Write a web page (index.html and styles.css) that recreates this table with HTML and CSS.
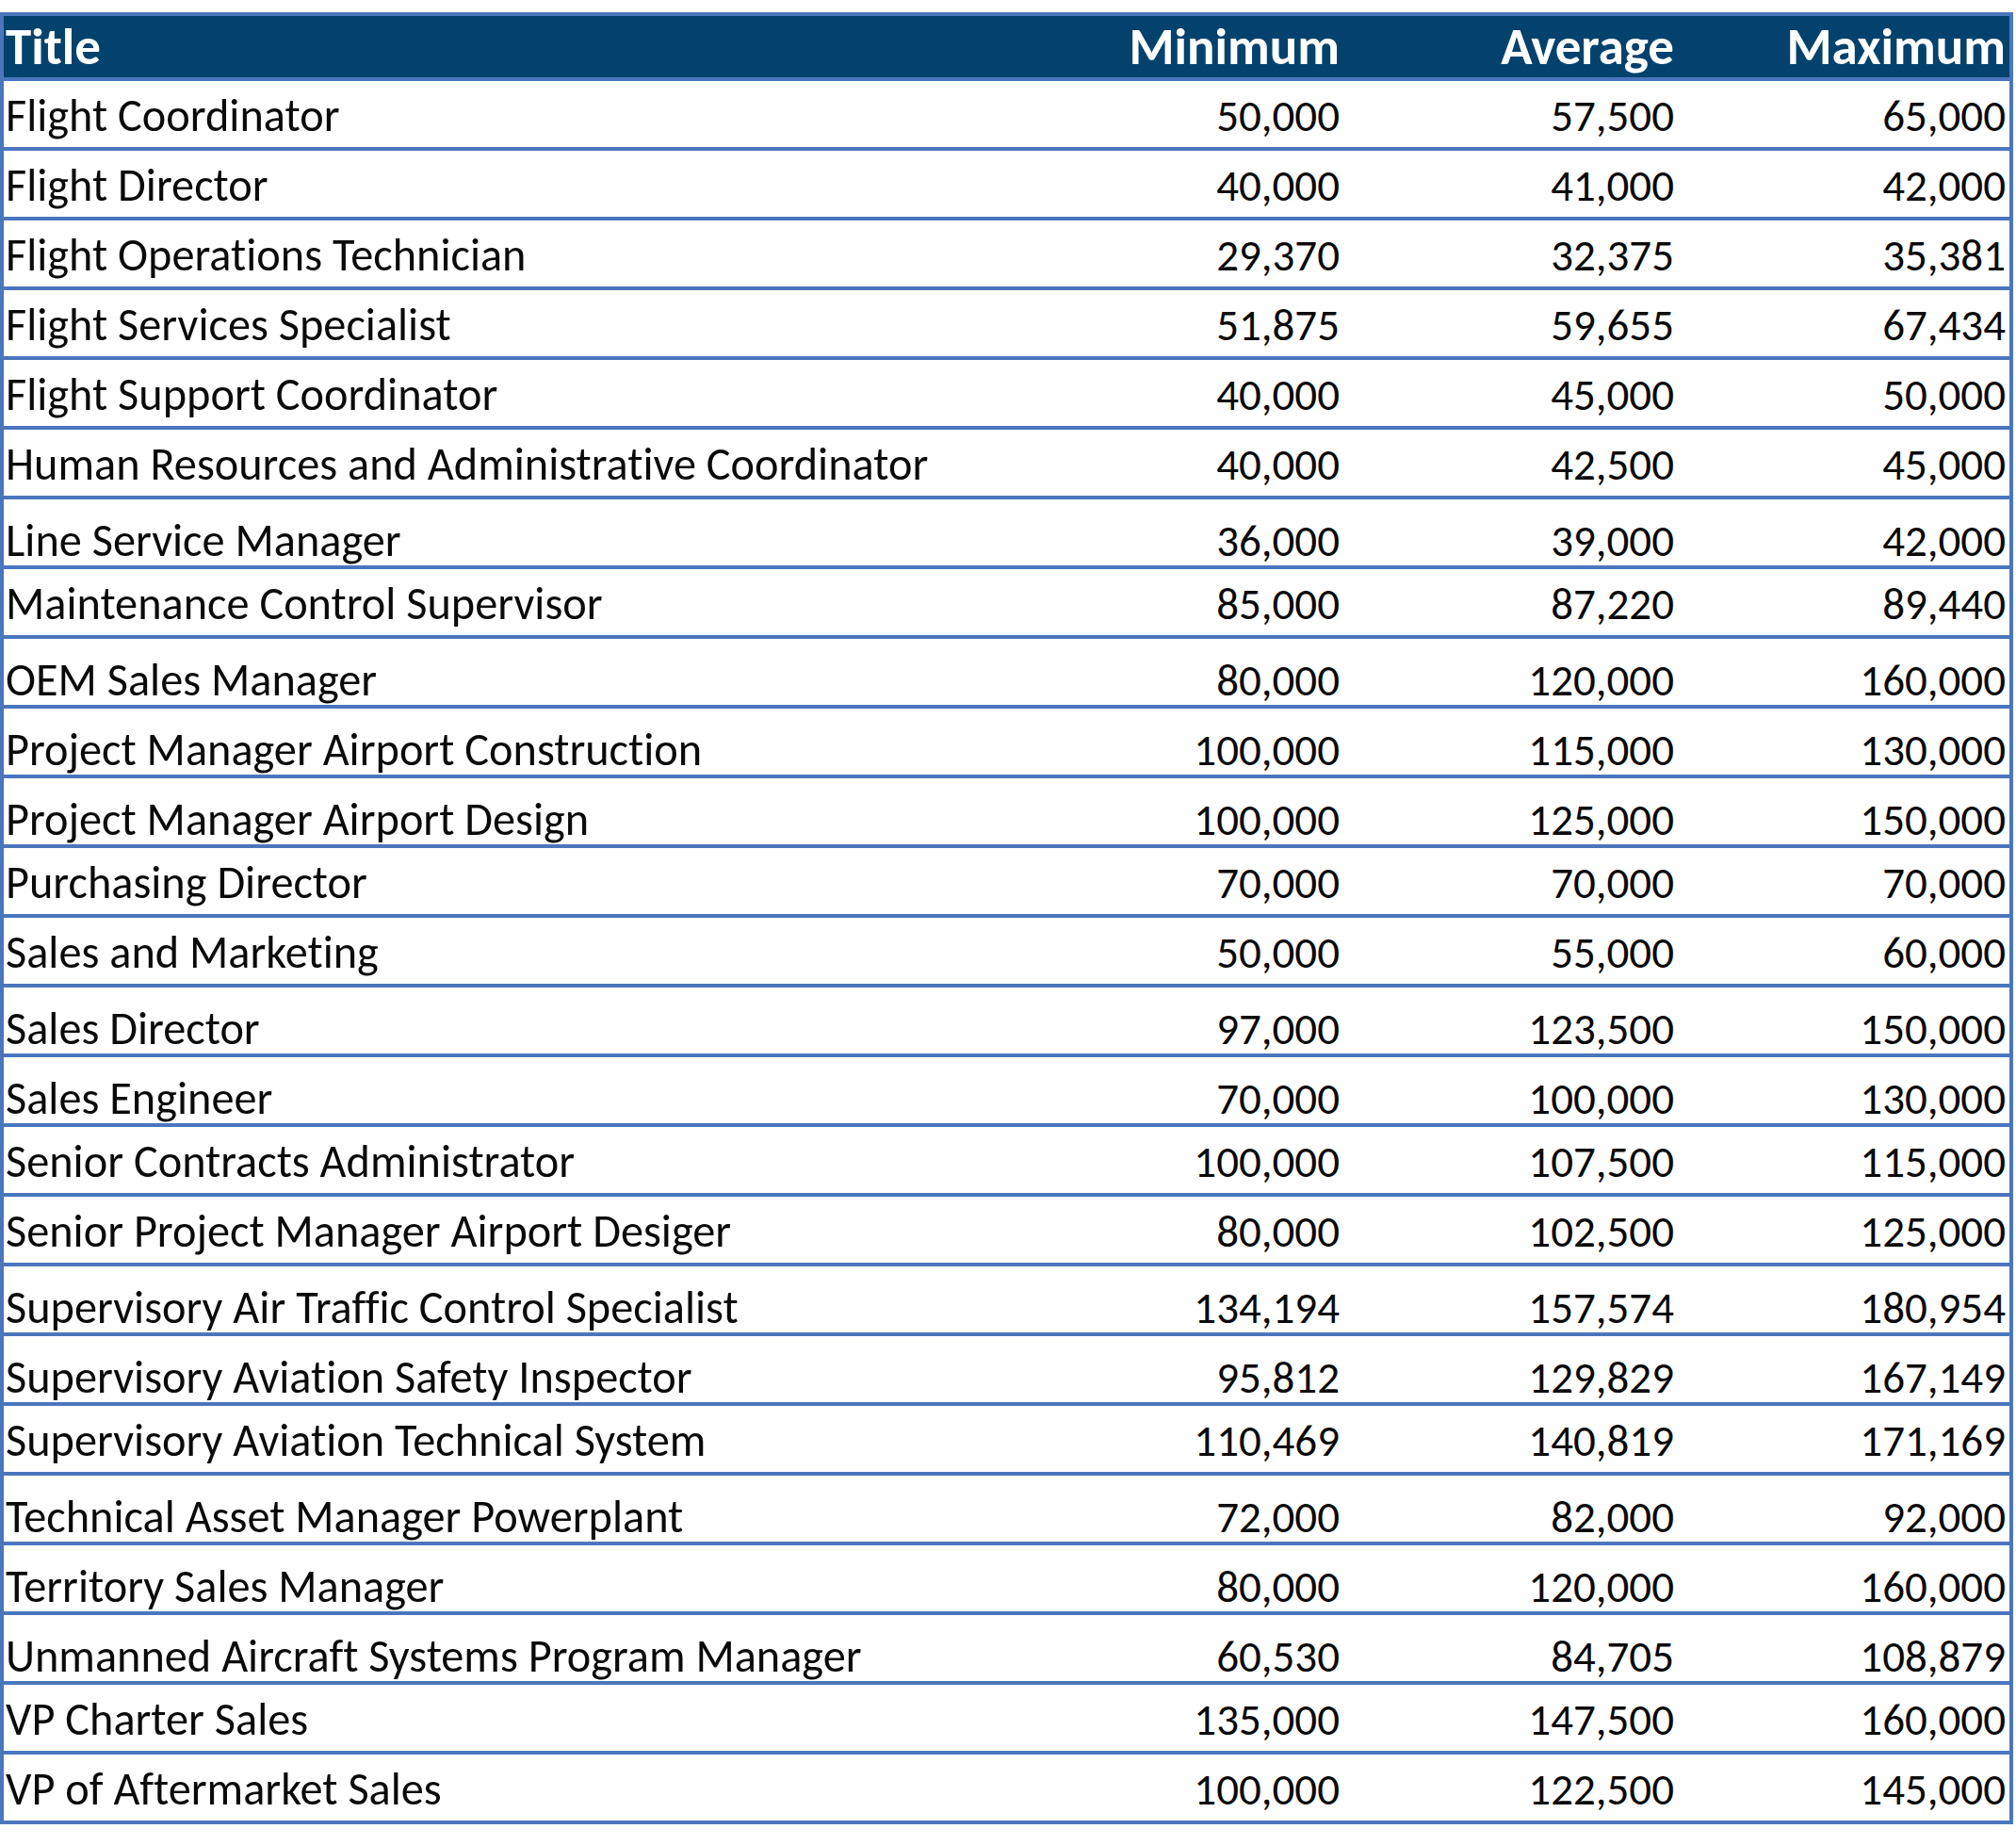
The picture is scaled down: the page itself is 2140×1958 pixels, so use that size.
FILE: index.html
```html
<!DOCTYPE html>
<html lang="en">
<head>
<meta charset="utf-8">
<title>Salary Table</title>
<link rel="stylesheet" href="styles.css">
</head>
<body>
<div class="table">
  <div class="row head"><div class="c t">Title</div><div class="c n">Minimum</div><div class="c n">Average</div><div class="c n">Maximum</div></div>
  <div class="row"><div class="c t">Flight Coordinator</div><div class="c n">50,000</div><div class="c n">57,500</div><div class="c n">65,000</div></div>
  <div class="row"><div class="c t">Flight Director</div><div class="c n">40,000</div><div class="c n">41,000</div><div class="c n">42,000</div></div>
  <div class="row"><div class="c t">Flight Operations Technician</div><div class="c n">29,370</div><div class="c n">32,375</div><div class="c n">35,381</div></div>
  <div class="row"><div class="c t">Flight Services Specialist</div><div class="c n">51,875</div><div class="c n">59,655</div><div class="c n">67,434</div></div>
  <div class="row"><div class="c t">Flight Support Coordinator</div><div class="c n">40,000</div><div class="c n">45,000</div><div class="c n">50,000</div></div>
  <div class="row"><div class="c t">Human Resources and Administrative Coordinator</div><div class="c n">40,000</div><div class="c n">42,500</div><div class="c n">45,000</div></div>
  <div class="row low"><div class="c t">Line Service Manager</div><div class="c n">36,000</div><div class="c n">39,000</div><div class="c n">42,000</div></div>
  <div class="row"><div class="c t">Maintenance Control Supervisor</div><div class="c n">85,000</div><div class="c n">87,220</div><div class="c n">89,440</div></div>
  <div class="row low"><div class="c t">OEM Sales Manager</div><div class="c n">80,000</div><div class="c n">120,000</div><div class="c n">160,000</div></div>
  <div class="row low"><div class="c t">Project Manager Airport Construction</div><div class="c n">100,000</div><div class="c n">115,000</div><div class="c n">130,000</div></div>
  <div class="row low"><div class="c t">Project Manager Airport Design</div><div class="c n">100,000</div><div class="c n">125,000</div><div class="c n">150,000</div></div>
  <div class="row"><div class="c t">Purchasing Director</div><div class="c n">70,000</div><div class="c n">70,000</div><div class="c n">70,000</div></div>
  <div class="row"><div class="c t">Sales and Marketing</div><div class="c n">50,000</div><div class="c n">55,000</div><div class="c n">60,000</div></div>
  <div class="row low"><div class="c t">Sales Director</div><div class="c n">97,000</div><div class="c n">123,500</div><div class="c n">150,000</div></div>
  <div class="row low"><div class="c t">Sales Engineer</div><div class="c n">70,000</div><div class="c n">100,000</div><div class="c n">130,000</div></div>
  <div class="row"><div class="c t">Senior Contracts Administrator</div><div class="c n">100,000</div><div class="c n">107,500</div><div class="c n">115,000</div></div>
  <div class="row"><div class="c t">Senior Project Manager Airport Desiger</div><div class="c n">80,000</div><div class="c n">102,500</div><div class="c n">125,000</div></div>
  <div class="row low"><div class="c t">Supervisory Air Traffic Control Specialist</div><div class="c n">134,194</div><div class="c n">157,574</div><div class="c n">180,954</div></div>
  <div class="row low"><div class="c t">Supervisory Aviation Safety Inspector</div><div class="c n">95,812</div><div class="c n">129,829</div><div class="c n">167,149</div></div>
  <div class="row"><div class="c t">Supervisory Aviation Technical System</div><div class="c n">110,469</div><div class="c n">140,819</div><div class="c n">171,169</div></div>
  <div class="row low"><div class="c t">Technical Asset Manager Powerplant</div><div class="c n">72,000</div><div class="c n">82,000</div><div class="c n">92,000</div></div>
  <div class="row low"><div class="c t">Territory Sales Manager</div><div class="c n">80,000</div><div class="c n">120,000</div><div class="c n">160,000</div></div>
  <div class="row low"><div class="c t">Unmanned Aircraft Systems Program Manager</div><div class="c n">60,530</div><div class="c n">84,705</div><div class="c n">108,879</div></div>
  <div class="row"><div class="c t">VP Charter Sales</div><div class="c n">135,000</div><div class="c n">147,500</div><div class="c n">160,000</div></div>
  <div class="row"><div class="c t">VP of Aftermarket Sales</div><div class="c n">100,000</div><div class="c n">122,500</div><div class="c n">145,000</div></div>
</div>
</body>
</html>
```
FILE: styles.css
```css
html, body {
  margin: 0;
  padding: 0;
  background: #ffffff;
}
body {
  padding-top: 13px;
  font-family: "Carlito", "Lato", sans-serif;
  font-variant-ligatures: none;
  color: #0a0a0a;
}
.table {
  width: 2137px;
  box-sizing: border-box;
  border: 4px solid #4b76bd;
}
.row {
  display: grid;
  grid-template-columns: 1fr 355px 355px 352px;
  height: 70px;
  border-top: 4px solid #4b76bd;
  font-size: 48.3px;
  line-height: 70px;
  box-sizing: content-box;
}
.row .c {
  white-space: nowrap;
  padding-top: 2px;
}
.row.low .c {
  padding-top: 9px;
}
.row .c.n {
  font-size: 47px;
}
.row.head {
  border-top: none;
  height: 65px;
  line-height: 65px;
  background: #03426d;
  color: #ffffff;
  font-weight: bold;
  font-size: 55px;
}
.row.head .c,
.row.head .c.n {
  padding-top: 0;
  font-size: 55px;
}
.t {
  padding-left: 2px;
}
.n {
  text-align: right;
  padding-right: 4px;
}
```
